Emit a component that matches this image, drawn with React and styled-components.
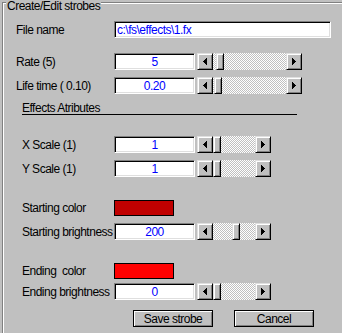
import React from "react";
import styled, { createGlobalStyle } from "styled-components";

const GlobalStyle = createGlobalStyle`
  html, body {
    margin: 0;
    padding: 0;
    background: #c0c0c0;
  }
  body {
    font-family: "Liberation Sans", Arial, sans-serif;
    font-size: 12px;
    letter-spacing: -0.5px;
    color: #000;
  }
`;

const fields = [
  { label: "Rate (5)", value: "5", gap: 15, width: 105, pos: 3, indent: 13 },
  { label: "Life time ( 0.10)", value: "0.20", gap: 7, width: 105, pos: 1, indent: 13 },
];

const scales = [
  { label: "X Scale (1)", value: "1", gap: 21, width: 74, pos: 0 },
  { label: "Y Scale (1)", value: "1", gap: 7, width: 74, pos: 0 },
];

const LeftArrow = () => (
  <svg width="4" height="7" viewBox="0 0 4 7" shapeRendering="crispEdges">
    <path d="M0 3h1v1H0zM1 2h1v3H1zM2 1h1v5H2zM3 0h1v7H3z" fill="#000" />
  </svg>
);

const RightArrow = () => (
  <svg width="4" height="7" viewBox="0 0 4 7" shapeRendering="crispEdges">
    <path d="M3 3h1v1H3zM2 2h1v3H2zM1 1h1v5H1zM0 0h1v7H0z" fill="#000" />
  </svg>
);

const ScrollBar = ({ width, pos }) => (
  <Scroll $w={width}>
    <ArrowButton>
      <LeftArrow />
    </ArrowButton>
    <Track>
      <Thumb $pos={pos} />
    </Track>
    <ArrowButton>
      <RightArrow />
    </ArrowButton>
  </Scroll>
);

const FieldRow = ({ label, value, gap, width, pos, indent = 19 }) => (
  <Row $gap={gap} $indent={indent}>
    <Label>{label}</Label>
    <Edit $w={81}>{value}</Edit>
    <ScrollBar width={width} pos={pos} />
  </Row>
);

const App = () => {
  return (
    <>
      <GlobalStyle />
      <Page>
        <Frame>
          <Legend>Create/Edit strobes</Legend>

          <Row $gap={18} $indent={13}>
            <Label>File name</Label>
            <Edit $w={217} $left>
              c:\fs\effects\1.fx
            </Edit>
          </Row>

          {fields.map((f) => (
            <FieldRow key={f.label} {...f} />
          ))}

          <Heading>Effects Atributes</Heading>

          {scales.map((f) => (
            <FieldRow key={f.label} {...f} />
          ))}

          <Row $gap={23} $indent={19} $h={16}>
            <Label>Starting color</Label>
            <Swatch $color="#c00000" />
          </Row>
          <FieldRow label="Starting brightness" value="200" gap={7} width={74} pos={19} />

          <Row $gap={23} $indent={19} $h={16}>
            <Label>Ending&nbsp; color</Label>
            <Swatch $color="#ff0000" />
          </Row>
          <FieldRow label="Ending brightness" value="0" gap={4} width={74} pos={0} />

          <Buttons>
            <Button>Save strobe</Button>
            <Button>Cancel</Button>
          </Buttons>
        </Frame>
      </Page>
    </>
  );
};

export default App;

const raised = `
  box-sizing: border-box;
  background: #c0c0c0;
  border: 1px solid;
  border-color: #dfdfdf #000 #000 #dfdfdf;
  box-shadow: inset 1px 1px 0 #fff, inset -1px -1px 0 #808080;
`;

const Page = styled.div`
  width: 342px;
  height: 333px;
  overflow: hidden;
  box-sizing: border-box;
  padding: 2px 0 0 2px;
`;

const Frame = styled.div`
  position: relative;
  height: 420px;
  border-top: 1px solid #808080;
  border-left: 1px solid #808080;
  box-shadow: inset 1px 1px 0 #fff;
  display: flex;
  flex-direction: column;
`;

const Legend = styled.div`
  position: absolute;
  top: -4px;
  left: 3px;
  padding: 0 1px;
  line-height: 14px;
  background: #c0c0c0;
`;

const Row = styled.div`
  display: grid;
  grid-template-columns: ${(p) => 111 - p.$indent}px auto auto;
  justify-content: start;
  align-items: center;
  height: ${(p) => p.$h || 17}px;
  margin-top: ${(p) => p.$gap}px;
  padding-left: ${(p) => p.$indent}px;
`;

const Label = styled.div`
  white-space: nowrap;
  line-height: 14px;
`;

const Edit = styled.div`
  width: ${(p) => p.$w}px;
  height: 17px;
  box-sizing: border-box;
  background: #fff;
  border: 1px solid;
  border-color: #808080 #fff #fff #808080;
  box-shadow: inset 1px 1px 0 #000, inset -1px -1px 0 #dfdfdf;
  color: #0000ff;
  display: flex;
  align-items: center;
  justify-content: ${(p) => (p.$left ? "flex-start" : "center")};
  padding: 0 2px;
  white-space: nowrap;
`;

const Scroll = styled.div`
  display: flex;
  width: ${(p) => p.$w}px;
  height: 17px;
  margin-left: 2px;
`;

const ArrowButton = styled.div`
  ${raised}
  width: 16px;
  height: 17px;
  display: flex;
  align-items: center;
  justify-content: center;
  flex: none;
`;

const Track = styled.div`
  flex: 1;
  display: flex;
  background-color: #c0c0c0;
  background-image: conic-gradient(
    #fff 25%,
    transparent 0 50%,
    #fff 0 75%,
    transparent 0
  );
  background-size: 2px 2px;
`;

const Thumb = styled.div`
  ${raised}
  width: 8px;
  height: 17px;
  margin-left: ${(p) => p.$pos}px;
`;

const Heading = styled.div`
  margin-top: 8px;
  margin-left: 19px;
  width: 275px;
  height: 12px;
  line-height: 12px;
  border-bottom: 1px solid #000;
`;

const Swatch = styled.div`
  width: 60px;
  height: 16px;
  box-sizing: border-box;
  border: 1px solid #000;
  background: ${(p) => p.$color};
`;

const Buttons = styled.div`
  display: flex;
  gap: 21px;
  margin-top: 10px;
  padding-left: 130px;
`;

const Button = styled.div`
  box-sizing: border-box;
  width: 80px;
  height: 17px;
  border: 1px solid #000;
  box-shadow: inset 1px 1px 0 #fff, inset -1px -1px 0 #808080;
  display: flex;
  align-items: center;
  justify-content: center;
  line-height: 14px;
`;
